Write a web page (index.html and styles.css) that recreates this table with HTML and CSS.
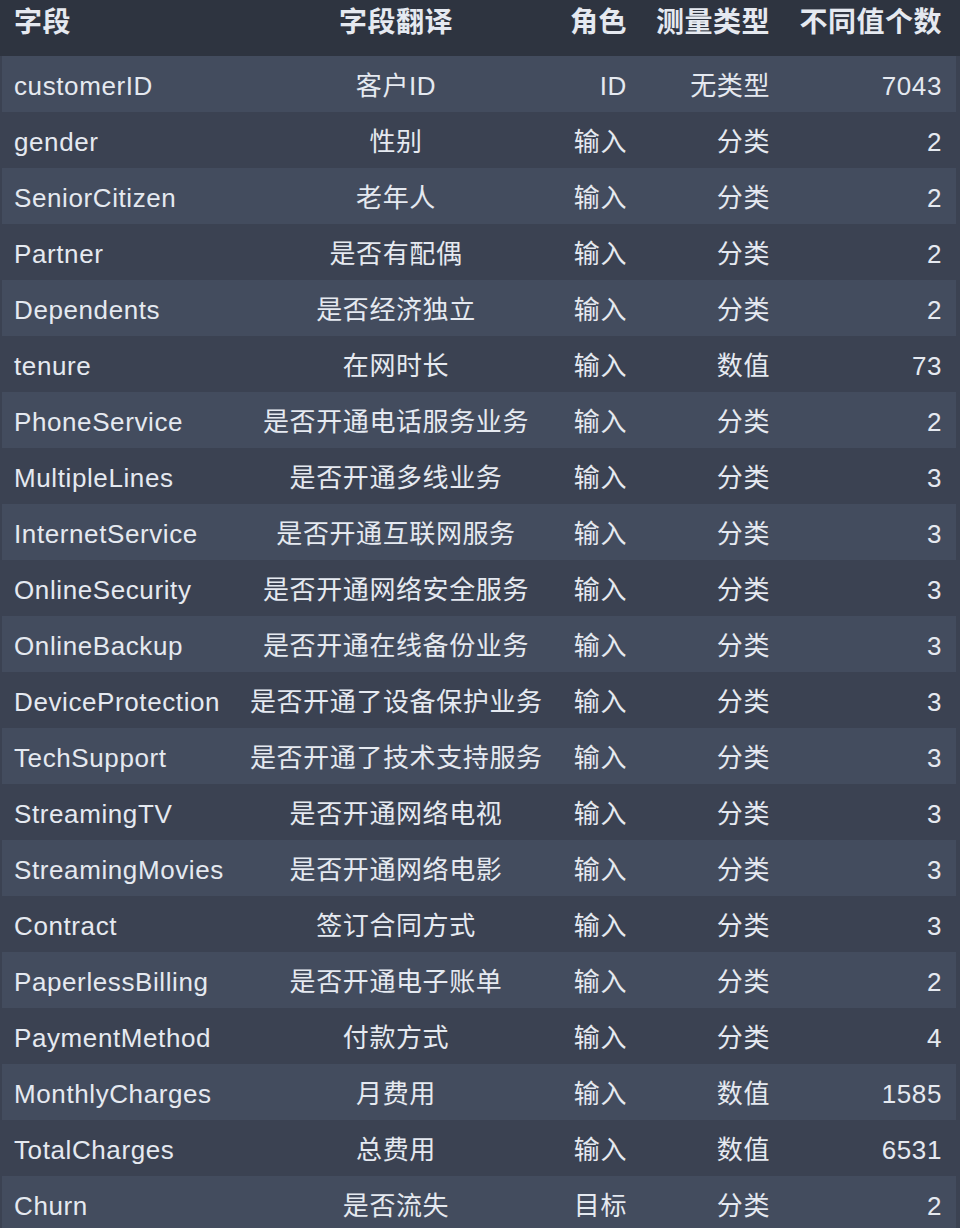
FILE: index.html
```html
<!DOCTYPE html>
<html lang="zh-CN">
<head>
    <meta charset="UTF-8">
    <meta name="viewport" content="width=device-width, initial-scale=1.0">
    <title>字段说明</title>
    <link rel="stylesheet" href="styles.css">
</head>
<body>
    <div class="table">
        <div class="row head">
            <div class="cell left">字段</div>
            <div class="cell center">字段翻译</div>
            <div class="cell right">角色</div>
            <div class="cell right">测量类型</div>
            <div class="cell right">不同值个数</div>
        </div>
        <div class="body">
            <div class="row"><div class="cell left">customerID</div><div class="cell center">客户ID</div><div class="cell right">ID</div><div class="cell right">无类型</div><div class="cell right">7043</div></div>
            <div class="row"><div class="cell left">gender</div><div class="cell center">性别</div><div class="cell right">输入</div><div class="cell right">分类</div><div class="cell right">2</div></div>
            <div class="row"><div class="cell left">SeniorCitizen</div><div class="cell center">老年人</div><div class="cell right">输入</div><div class="cell right">分类</div><div class="cell right">2</div></div>
            <div class="row"><div class="cell left">Partner</div><div class="cell center">是否有配偶</div><div class="cell right">输入</div><div class="cell right">分类</div><div class="cell right">2</div></div>
            <div class="row"><div class="cell left">Dependents</div><div class="cell center">是否经济独立</div><div class="cell right">输入</div><div class="cell right">分类</div><div class="cell right">2</div></div>
            <div class="row"><div class="cell left">tenure</div><div class="cell center">在网时长</div><div class="cell right">输入</div><div class="cell right">数值</div><div class="cell right">73</div></div>
            <div class="row"><div class="cell left">PhoneService</div><div class="cell center">是否开通电话服务业务</div><div class="cell right">输入</div><div class="cell right">分类</div><div class="cell right">2</div></div>
            <div class="row"><div class="cell left">MultipleLines</div><div class="cell center">是否开通多线业务</div><div class="cell right">输入</div><div class="cell right">分类</div><div class="cell right">3</div></div>
            <div class="row"><div class="cell left">InternetService</div><div class="cell center">是否开通互联网服务</div><div class="cell right">输入</div><div class="cell right">分类</div><div class="cell right">3</div></div>
            <div class="row"><div class="cell left">OnlineSecurity</div><div class="cell center">是否开通网络安全服务</div><div class="cell right">输入</div><div class="cell right">分类</div><div class="cell right">3</div></div>
            <div class="row"><div class="cell left">OnlineBackup</div><div class="cell center">是否开通在线备份业务</div><div class="cell right">输入</div><div class="cell right">分类</div><div class="cell right">3</div></div>
            <div class="row"><div class="cell left">DeviceProtection</div><div class="cell center">是否开通了设备保护业务</div><div class="cell right">输入</div><div class="cell right">分类</div><div class="cell right">3</div></div>
            <div class="row"><div class="cell left">TechSupport</div><div class="cell center">是否开通了技术支持服务</div><div class="cell right">输入</div><div class="cell right">分类</div><div class="cell right">3</div></div>
            <div class="row"><div class="cell left">StreamingTV</div><div class="cell center">是否开通网络电视</div><div class="cell right">输入</div><div class="cell right">分类</div><div class="cell right">3</div></div>
            <div class="row"><div class="cell left">StreamingMovies</div><div class="cell center">是否开通网络电影</div><div class="cell right">输入</div><div class="cell right">分类</div><div class="cell right">3</div></div>
            <div class="row"><div class="cell left">Contract</div><div class="cell center">签订合同方式</div><div class="cell right">输入</div><div class="cell right">分类</div><div class="cell right">3</div></div>
            <div class="row"><div class="cell left">PaperlessBilling</div><div class="cell center">是否开通电子账单</div><div class="cell right">输入</div><div class="cell right">分类</div><div class="cell right">2</div></div>
            <div class="row"><div class="cell left">PaymentMethod</div><div class="cell center">付款方式</div><div class="cell right">输入</div><div class="cell right">分类</div><div class="cell right">4</div></div>
            <div class="row"><div class="cell left">MonthlyCharges</div><div class="cell center">月费用</div><div class="cell right">输入</div><div class="cell right">数值</div><div class="cell right">1585</div></div>
            <div class="row"><div class="cell left">TotalCharges</div><div class="cell center">总费用</div><div class="cell right">输入</div><div class="cell right">数值</div><div class="cell right">6531</div></div>
            <div class="row"><div class="cell left">Churn</div><div class="cell center">是否流失</div><div class="cell right">目标</div><div class="cell right">分类</div><div class="cell right">2</div></div>
        </div>
    </div>
</body>
</html>
```

FILE: styles.css
```css
/* Nord-ish data table */
*, *:before, *:after {
    margin: 0;
    padding: 0;
    box-sizing: border-box;
}

body {
    font-family: "Liberation Sans", "Noto Sans CJK SC", sans-serif;
    background-color: #3b4252;
    color: #e5e9f0;
    font-size: 26px;
    letter-spacing: 0.6px;
    line-height: 26px;
}

.row {
    display: grid;
    grid-template-columns: 234px 320px 85px 143px 172px;
    height: 56px;
    align-items: center;
}

.cell {
    padding: 0 14px;
    white-space: nowrap;
}

.body .cell {
    padding-top: 4px;
}

.left {
    text-align: left;
    padding-left: 12px;
}
.center { text-align: center; }
.right { text-align: right; }

.head {
    background-color: #2e3440;
    padding: 0 4px 0 2px;
    align-items: start;
    padding-top: 9px;
    font-weight: bold;
    font-size: 28px;
    letter-spacing: 0.5px;
    line-height: 28px;
}

.body {
    padding: 0 4px 0 2px;
}

.body .row:nth-child(odd) {
    background-color: #434c5e;
}

.body .row:nth-child(even) {
    background-color: #3b4252;
}
```
